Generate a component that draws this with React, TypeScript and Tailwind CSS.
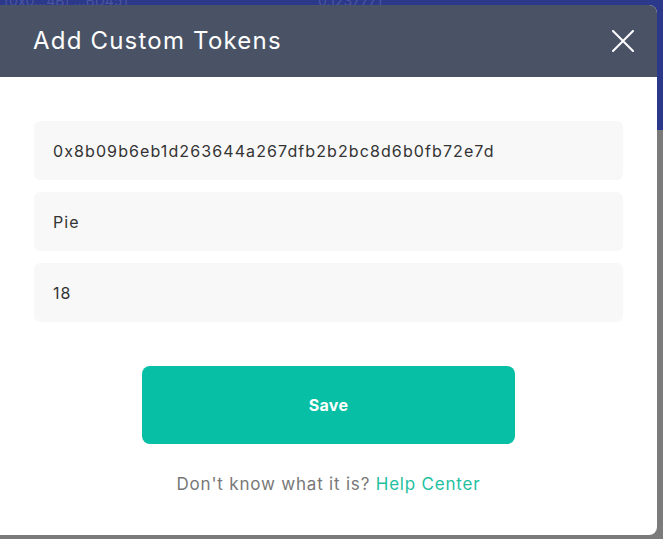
const font = { fontFamily: 'Inter, "Open Sans", sans-serif' }

function Field({ value }: { value: string }) {
  return (
    <div className="flex h-[59px] items-center rounded-md bg-[#f8f8f8] pl-[19px] text-[16px] tracking-[1.1px] text-[#333333]">
      {value}
    </div>
  )
}

export default function App() {
  return (
    <div className="relative h-[539px] w-[663px] overflow-hidden bg-[#7b7b7b]" style={font}>
      <div className="h-[130px] bg-[#2c388a] text-[14px] leading-[10px] text-[#4a559e]">
        <div className="flex gap-[190px] pl-1 -translate-y-[4px]">
          <span>[0x0...4B] ...BD451</span>
          <span>0.1237771</span>
        </div>
      </div>

      <div className="absolute left-0 top-[5px] flex h-[530px] w-[657px] flex-col overflow-hidden rounded-r-lg bg-white">
        <div className="flex h-[72px] shrink-0 items-center justify-between bg-[#4a5366] pl-[33px] pr-[23px]">
          <h2 className="text-[24px] font-normal tracking-[1.2px] text-white">Add Custom Tokens</h2>
          <button type="button" className="flex h-[22px] w-[22px] items-center justify-center text-white" aria-label="Close">
            <svg viewBox="0 0 22 22" className="h-[22px] w-[22px]" fill="none" stroke="currentColor" strokeWidth={2} strokeLinecap="round">
              <path d="M1 1 L21 21 M21 1 L1 21" />
            </svg>
          </button>
        </div>

        <div className="flex flex-col px-[34px] pt-[44px]">
          <div className="grid gap-3">
            <Field value="0x8b09b6eb1d263644a267dfb2b2bc8d6b0fb72e7d" />
            <Field value="Pie" />
            <Field value="18" />
          </div>

          <button
            type="button"
            className="mx-auto mt-[44px] flex h-[78px] w-[373px] items-center justify-center rounded-lg bg-[#07bfa5] text-[16px] font-bold tracking-[0.3px] text-white"
          >
            Save
          </button>

          <p className="mt-[28px] text-center text-[17px] tracking-[0.8px] text-[#777777]">
            Don't know what it is? <span className="text-[#1fbf9f]">Help Center</span>
          </p>
        </div>
      </div>
    </div>
  )
}
